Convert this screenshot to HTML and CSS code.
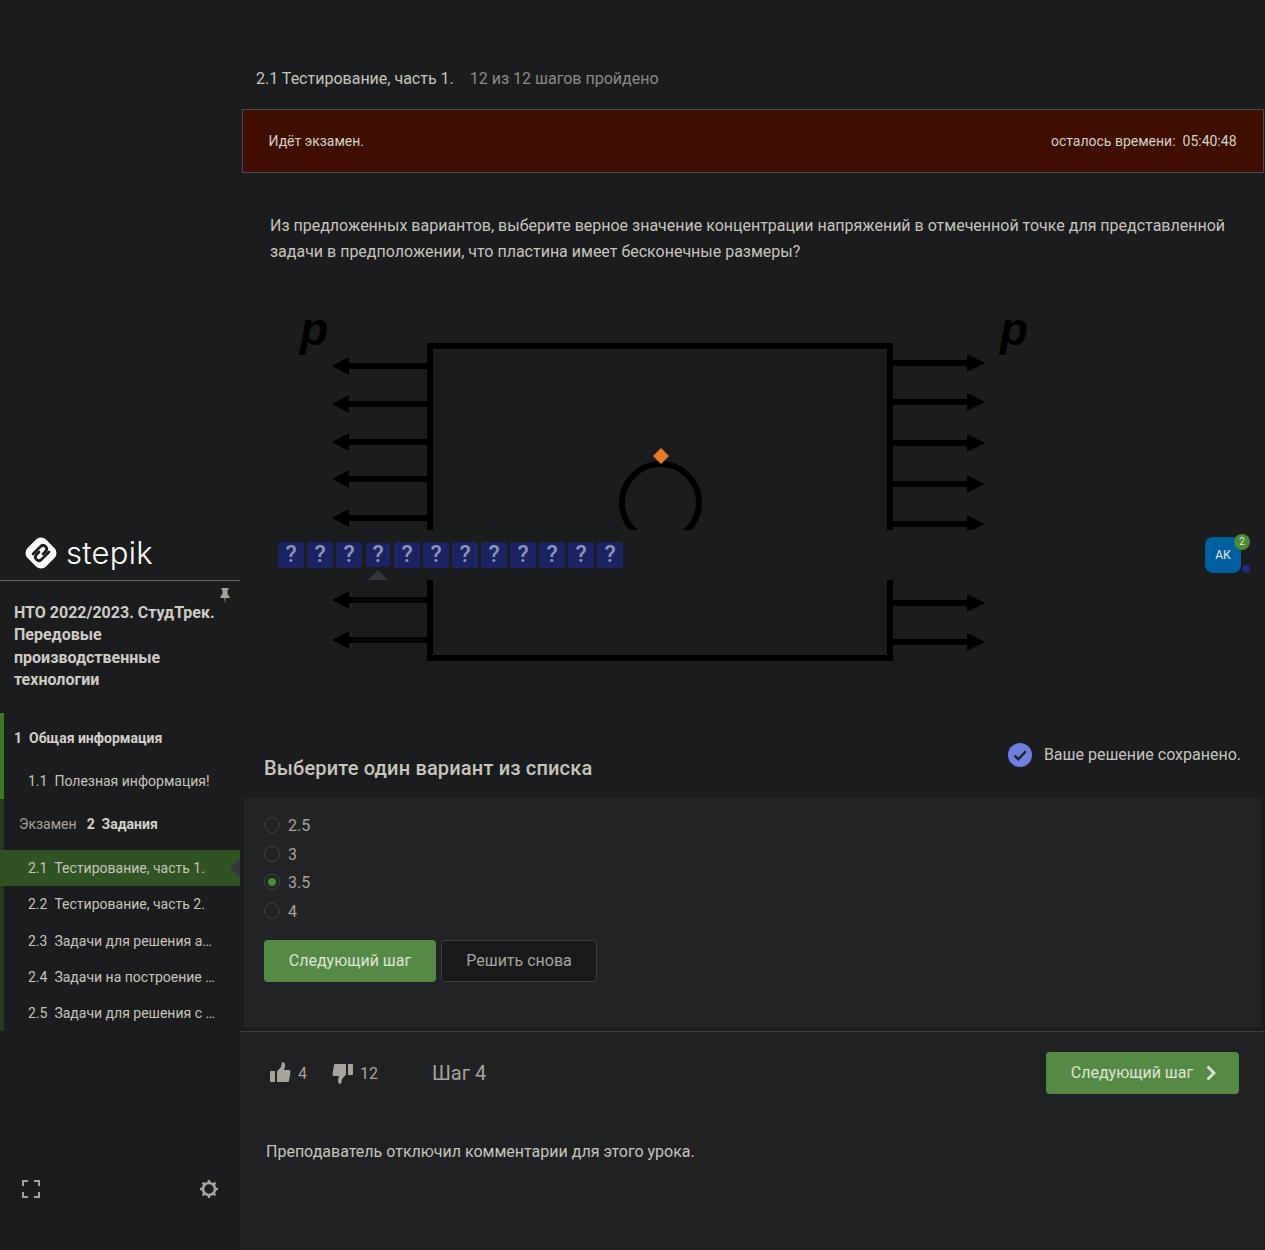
FILE: index.html
```html
<!DOCTYPE html>
<html lang="ru">
<head>
    <meta charset="UTF-8">
    <meta name="viewport" content="width=device-width, initial-scale=1.0">
    <title>Тестирование, часть 1.</title>
    <link rel="stylesheet" href="styles.css">
</head>
<body>
    <header class="topbar">
        <div class="brand">
            <svg class="brand-mark" viewBox="0 0 34 34">
                <rect x="4" y="4" width="26" height="26" rx="7" transform="rotate(45 17 17)" fill="#fff"/>
                <path d="M9 18l8-8a3.6 3.6 0 0 1 5 5l-3 3" fill="none" stroke="#1b1c1e" stroke-width="2.8" stroke-linecap="round"/>
                <path d="M25 16l-8 8a3.6 3.6 0 0 1-5-5l3-3" fill="none" stroke="#1b1c1e" stroke-width="2.8" stroke-linecap="round"/>
            </svg>
            <span class="brand-name">stepik</span>
        </div>
        <div class="question-nav">
            <span class="question-box">?</span>
            <span class="question-box">?</span>
            <span class="question-box">?</span>
            <span class="question-box is-current">?</span>
            <span class="question-box">?</span>
            <span class="question-box">?</span>
            <span class="question-box">?</span>
            <span class="question-box">?</span>
            <span class="question-box">?</span>
            <span class="question-box">?</span>
            <span class="question-box">?</span>
            <span class="question-box">?</span>
        </div>
        <div class="avatar">
            АК
            <span class="avatar-count">2</span>
            <span class="avatar-dot"></span>
        </div>
    </header>

    <div class="layout">
        <aside class="sidebar">
            <svg class="pin" viewBox="0 0 10 16">
                <path d="M1.500 0h7v1.500L7.500 2v4l2 2.500V10H5.600L5 15.500 4.400 10H.5V8.500l2-2.500V2l-1-.5z" fill="#a8a39a"/>
            </svg>
            <h2 class="course-title">НТО 2022/2023. СтудТрек. Передовые производственные технологии</h2>

            <section class="module module-done">
                <div class="module-head"><b>1&nbsp; Общая информация</b></div>
                <a class="lesson"><span class="lesson-num">1.1</span>Полезная информация!</a>
            </section>

            <section class="module module-exam">
                <div class="module-head module-head-exam"><span class="exam-tag">Экзамен</span><b>2&nbsp; Задания</b></div>
                <a class="lesson is-active"><span class="lesson-num">2.1</span>Тестирование, часть 1.</a>
                <a class="lesson"><span class="lesson-num">2.2</span>Тестирование, часть 2.</a>
                <a class="lesson"><span class="lesson-num">2.3</span>Задачи для решения аналитически</a>
                <a class="lesson"><span class="lesson-num">2.4</span>Задачи на построение сетки</a>
                <a class="lesson"><span class="lesson-num">2.5</span>Задачи для решения с помощью САЕ</a>
            </section>

            <div class="sidebar-tools">
                <svg class="tool-icon" viewBox="0 0 18 18">
                    <path d="M0 0h6v2H2v4H0zM12 0h6v6h-2V2h-4zM0 12h2v4h4v2H0zM16 12h2v6h-6v-2h4z" fill="#a8a39a"/>
                </svg>
                <svg class="tool-icon" viewBox="0 0 18 18">
                    <circle cx="9" cy="9" r="6" fill="none" stroke="#a8a39a" stroke-width="2.600"/>
                    <path d="M9 0v3M9 15v3M0 9h3M15 9h3M2.600 2.600l2.200 2.200M13.200 13.200l2.200 2.200M15.400 2.600l-2.200 2.200M4.800 13.200l-2.200 2.200" stroke="#a8a39a" stroke-width="2.400"/>
                </svg>
            </div>
        </aside>

        <main class="content">
            <div class="lesson-bar">
                <span class="lesson-name">2.1 Тестирование, часть 1.</span>
                <span class="lesson-progress">12 из 12 шагов пройдено</span>
            </div>

            <div class="exam-bar">
                <span>Идёт экзамен.</span>
                <span>осталось времени:&nbsp; 05:40:48</span>
            </div>

            <p class="question">Из предложенных вариантов, выберите верное значение концентрации напряжений в отмеченной точке для представленной задачи в предположении, что пластина имеет бесконечные размеры?</p>

            <svg class="figure" viewBox="240 290 1025 420">
                <text x="300" y="345" class="figure-label">p</text>
                <text x="1000" y="345" class="figure-label">p</text>
                <rect x="430" y="346" width="460" height="312" fill="none" stroke="#000" stroke-width="6"/>
                <circle cx="660.500" cy="502.500" r="38.500" fill="none" stroke="#000" stroke-width="6"/>
                <path d="M661 448l8 8-8 8-8-8z" fill="#e67a2b"/>
                <g class="arrows-left">
                    <path d="M428 363H349V357L332 366 349 375V369H428z"/>
                    <path d="M428 401H349V395L332 404 349 413V407H428z"/>
                    <path d="M428 439H349V433L332 442 349 451V445H428z"/>
                    <path d="M428 476H349V470L332 479 349 488V482H428z"/>
                    <path d="M428 515H349V509L332 518 349 527V521H428z"/>
                    <path d="M428 597H349V591L332 600 349 609V603H428z"/>
                    <path d="M428 637H349V631L332 640 349 649V643H428z"/>
                </g>
                <g class="arrows-right">
                    <path d="M892 360H967V354L985 363 967 372V366H892z"/>
                    <path d="M892 399H967V393L985 402 967 411V405H892z"/>
                    <path d="M892 440H967V434L985 443 967 452V446H892z"/>
                    <path d="M892 481H967V475L985 484 967 493V487H892z"/>
                    <path d="M892 521H967V515L985 524 967 533V527H892z"/>
                    <path d="M892 600H967V594L985 603 967 612V606H892z"/>
                    <path d="M892 639H967V633L985 642 967 651V645H892z"/>
                </g>
            </svg>

            <div class="quiz-head">
                <h3 class="quiz-title">Выберите один вариант из списка</h3>
                <div class="saved">
                    <svg class="saved-icon" viewBox="0 0 24 24">
                        <circle cx="12" cy="12" r="12" fill="#6f7fdd"/>
                        <path d="M6.500 12.500l3.800 3.800 7.500-8" fill="none" stroke="#1f2123" stroke-width="2.400"/>
                    </svg>
                    <span class="saved-text">Ваше решение сохранено.</span>
                </div>
            </div>

            <div class="quiz-box">
                <label class="option"><span class="radio"></span>2.5</label>
                <label class="option"><span class="radio"></span>3</label>
                <label class="option"><span class="radio is-checked"></span>3.5</label>
                <label class="option"><span class="radio"></span>4</label>
                <div class="quiz-actions">
                    <button class="btn btn-green">Следующий шаг</button>
                    <button class="btn btn-dark">Решить снова</button>
                </div>
            </div>

            <div class="step-footer">
                <div class="step-row">
                    <div class="votes">
                        <svg class="thumb thumb-up" viewBox="0 0 21 21">
                            <path d="M0 10a1 1 0 0 1 1-1h4v11H1a1 1 0 0 1-1-1zM7 9.500l4-4.500 1-5q3.500 0 3 4l-1 4h5q1.800 0 1.500 2l-1.500 9q-.2 1-1.500 1H7z" fill="#a8a39a"/>
                        </svg>
                        <span class="vote-count">4</span>
                        <svg class="thumb thumb-down" viewBox="0 0 21 21">
                            <path d="M0 10a1 1 0 0 1 1-1h4v11H1a1 1 0 0 1-1-1zM7 9.500l4-4.500 1-5q3.500 0 3 4l-1 4h5q1.800 0 1.500 2l-1.500 9q-.2 1-1.500 1H7z" fill="#a8a39a"/>
                        </svg>
                        <span class="vote-count">12</span>
                        <span class="step-number">Шаг 4</span>
                    </div>
                    <button class="btn btn-green btn-next">
                        Следующий шаг
                        <svg class="chevron" viewBox="0 0 10 16">
                            <path d="M1.500 1.500L8 8l-6.500 6.500" fill="none" stroke="#dfe3d8" stroke-width="2.800"/>
                        </svg>
                    </button>
                </div>
                <p class="comments-off">Преподаватель отключил комментарии для этого урока.</p>
            </div>
        </main>
    </div>
</body>
</html>
```

FILE: styles.css
```css
* {
    margin: 0;
    padding: 0;
    box-sizing: border-box;
}

body {
    background-color: #1a1c1e;
    color: #c8c4bc;
    font-family: 'Roboto', sans-serif;
    font-size: 16px;
    position: relative;
    height: 1250px;
    overflow: hidden;
}

.topbar {
    position: absolute;
    z-index: 2;
    top: 530px;
    left: 0;
    right: 0;
    height: 50px;
    background-color: #1b1c1e;
    display: flex;
    align-items: flex-start;
}

.brand {
    width: 240px;
    height: 51px;
    border-bottom: 1px solid #6b665c;
    display: flex;
    align-items: center;
    padding-left: 24px;
    padding-bottom: 5px;
    gap: 8px;
}

.brand-mark {
    width: 34px;
    height: 34px;
}

.brand-name {
    font-family: 'Inter', sans-serif;
    font-size: 31px;
    font-weight: 300;
    letter-spacing: 0.3px;
    line-height: 34px;
    color: #fff;
}

.question-nav {
    display: flex;
    align-items: center;
    gap: 3px;
    margin-left: 38px;
    margin-top: 12px;
    height: 26px;
}

.question-box {
    width: 26px;
    height: 26px;
    border-radius: 3px;
    background-color: #1b2363;
    color: #8f93b8;
    font-size: 23px;
    font-weight: 500;
    line-height: 26px;
    text-align: center;
    position: relative;
}

.question-box.is-current {
    width: 24px;
    height: 24px;
    margin: 0 1px;
    line-height: 24px;
}

.question-box.is-current::after {
    content: "";
    position: absolute;
    left: 2px;
    top: 27px;
    border-left: 10px solid transparent;
    border-right: 10px solid transparent;
    border-bottom: 10px solid #33363a;
}

.avatar {
    position: absolute;
    top: 7px;
    left: 1205px;
    width: 36px;
    height: 36px;
    border-radius: 8px;
    background-color: #005f9e;
    color: #e8e8e8;
    font-size: 12px;
    line-height: 36px;
    text-align: center;
}

.avatar-count {
    position: absolute;
    top: -3px;
    right: -9px;
    width: 16px;
    height: 16px;
    border-radius: 50%;
    background-color: #4a8a3a;
    font-size: 10px;
    line-height: 16px;
}

.avatar-dot {
    position: absolute;
    right: -9px;
    bottom: 0;
    width: 8px;
    height: 8px;
    border-radius: 50%;
    background-color: #1c2a80;
}

.layout {
    display: grid;
    grid-template-columns: 240px 1fr;
    height: 1250px;
}

.sidebar {
    position: relative;
    background-color: #1b1c1e;
    padding-top: 601.5px;
    display: flex;
    flex-direction: column;
}

.pin {
    position: absolute;
    top: 588px;
    left: 220px;
    width: 10px;
    height: 16px;
}

.course-title {
    font-size: 16px;
    font-weight: 700;
    line-height: 22.5px;
    padding: 0 20px 0 14px;
    margin-bottom: 21.5px;
    color: #cfccc6;
}

.module {
    border-left: 4px solid #3f7a2a;
}

.module-exam {
    border-left-color: #263a22;
}

.module-head {
    height: 50px;
    display: flex;
    align-items: center;
    padding-left: 10px;
    font-size: 14px;
    color: #d4d1ca;
}

.module-head-exam {
    height: 51px;
    padding-left: 15px;
    padding-bottom: 1px;
}

.exam-tag {
    color: #a8a39a;
    margin-right: 10px;
}

.lesson {
    display: block;
    height: 36.2px;
    line-height: 36px;
    font-size: 14px;
    padding: 0 24px 0 24px;
    color: #c8c4bc;
    white-space: nowrap;
    overflow: hidden;
    text-overflow: ellipsis;
}

.lesson-num {
    margin-right: 7px;
}

.lesson.is-active {
    position: relative;
    background-color: #2f5322;
    margin-left: -4px;
    padding-left: 28px;
}

.lesson.is-active::after {
    content: "";
    position: absolute;
    right: 0;
    top: 8px;
    border-top: 10px solid transparent;
    border-bottom: 10px solid transparent;
    border-right: 10px solid #33373a;
}

.sidebar-tools {
    margin-top: auto;
    padding: 0 22px 52px;
    display: flex;
    justify-content: space-between;
}

.tool-icon {
    width: 18px;
    height: 18px;
}

.content {
    display: flex;
    flex-direction: column;
}

.lesson-bar {
    padding: 69px 16px 0;
    height: 109px;
    line-height: 19px;
}

.lesson-name {
    margin-right: 12px;
}

.lesson-progress {
    color: #8f8b83;
}

.exam-bar {
    margin: 0 1px 0 2px;
    height: 64px;
    padding: 0 26.5px 0 25.5px;
    background-color: #3f0e00;
    border: 1px solid #4a4a4a;
    display: flex;
    justify-content: space-between;
    align-items: center;
    font-size: 14px;
    color: #d4d1ca;
}

.question {
    margin-top: 40px;
    padding: 0 30px;
    line-height: 26px;
    letter-spacing: -0.005px;
}

.figure {
    display: block;
    width: 1025px;
    height: 420px;
    margin-top: 25px;
}

.figure-label {
    font-family: 'Liberation Sans', sans-serif;
    font-size: 46px;
    font-weight: 700;
    font-style: italic;
}

.quiz-head {
    height: 88px;
    padding: 29px 24px 0;
    display: flex;
    justify-content: space-between;
    align-items: flex-start;
}

.quiz-title {
    font-size: 20px;
    font-weight: 500;
    line-height: 30px;
    margin-top: 14px;
    letter-spacing: 0.17px;
}

.saved {
    display: flex;
    align-items: center;
    gap: 12px;
    line-height: 24px;
    margin-top: 3px;
}

.saved-text {
    padding-top: 1px;
}

.saved-icon {
    width: 24px;
    height: 24px;
}

.quiz-box {
    margin: 0 4px;
    height: 229px;
    padding: 13.3px 20px 0;
    background-color: #212325;
}

.option {
    display: flex;
    align-items: center;
    gap: 8px;
    height: 28.67px;
    color: #a8a49c;
}

.radio {
    width: 16px;
    height: 16px;
    margin-top: -1px;
    border-radius: 50%;
    border: 1px solid #3f4143;
    position: relative;
}

.radio.is-checked::after {
    content: "";
    position: absolute;
    top: 3px;
    left: 3px;
    width: 8px;
    height: 8px;
    border-radius: 50%;
    background-color: #4a8f2c;
}

.quiz-actions {
    display: flex;
    gap: 5px;
    margin-top: 14px;
}

.btn {
    height: 42px;
    border-radius: 4px;
    font-family: inherit;
    font-size: 16px;
    border: none;
}

.btn-green {
    background-color: #548a43;
    color: #dfe3d8;
    width: 172px;
}

.btn-dark {
    background-color: #18191b;
    border: 1px solid #3b3d40;
    color: #a8a49c;
    width: 156px;
}

.step-footer {
    flex: 1;
    margin-top: 4px;
    border-top: 1px solid #3a3c3e;
    background-color: #1f2123;
    padding: 20px 26px 0 26px;
}

.step-row {
    display: flex;
    justify-content: space-between;
    align-items: center;
}

.votes {
    display: flex;
    align-items: center;
    margin-left: 4px;
    color: #a8a39a;
}

.thumb {
    width: 21px;
    height: 21px;
}

.thumb-up {
    margin-bottom: 2px;
}

.thumb-down {
    transform: rotate(180deg);
    margin-left: 25px;
}

.vote-count {
    margin-left: 7px;
}

.step-number {
    font-size: 20px;
    margin-left: 54px;
}

.btn-next {
    width: 193px;
    display: flex;
    align-items: center;
    justify-content: center;
    gap: 13px;
    padding-left: 2px;
    padding-bottom: 1px;
}

.chevron {
    width: 10px;
    height: 16px;
}

.comments-off {
    margin-top: 48px;
    line-height: 19px;
}
```
